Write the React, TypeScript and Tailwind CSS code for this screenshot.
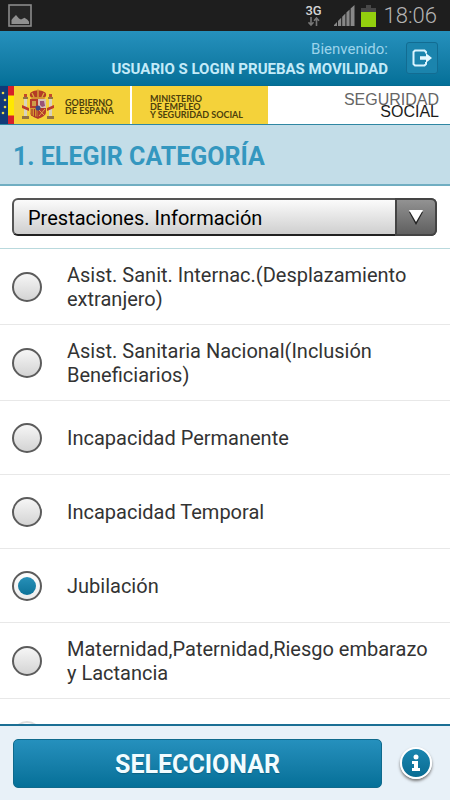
import { useState } from "react";

const categories = [
  "Asist. Sanit. Internac.(Desplazamiento extranjero)",
  "Asist. Sanitaria Nacional(Inclusión Beneficiarios)",
  "Incapacidad Permanente",
  "Incapacidad Temporal",
  "Jubilación",
  "Maternidad,Paternidad,Riesgo embarazo y Lactancia",
];

const radioClass =
  "m-0 size-[30px] shrink-0 appearance-none rounded-full border-2 border-[#5c5c5c] bg-linear-to-b from-[#f6f6f6] to-[#d4d4d4] p-1 checked:from-[#fdfdfd] checked:to-[#ededed] checked:before:block checked:before:size-[18px] checked:before:rounded-full checked:before:bg-linear-to-b checked:before:from-[#2790b8] checked:before:to-[#0c7399] checked:before:content-['']";

function StatusBar() {
  return (
    <div className="flex h-[31px] shrink-0 items-center bg-[#1e1e1e] pr-[13px] pl-2">
      <svg width="24" height="23" viewBox="0 0 24 23" aria-hidden="true">
        <rect x="1" y="1" width="22" height="21" fill="#262626" stroke="#8b8b8b" strokeWidth="1.6" />
        <path d="M3.500 20v-4l1.500-2 3-3 3 3.500 2 1 3.500-1.800 3 2 1.500 2V20z" fill="#909090" />
      </svg>
      <div className="ml-auto flex items-center">
        <div className="mr-3 flex w-4 flex-col items-center">
          <span className="font-['Roboto',sans-serif] text-[13px] leading-3 font-medium text-[#d5d5d5]">3G</span>
          <svg width="12" height="9" viewBox="0 0 12 9" aria-hidden="true" fill="none" stroke="#777" strokeWidth="1.6">
            <path d="M3 0v8M0.500 5.300L3 8l2.500-2.700M8.500 9V1M6 3.700L8.500 1 11 3.700" />
          </svg>
        </div>
        <svg className="mr-1.5" width="21" height="21" viewBox="0 0 21 21" aria-hidden="true">
          <path d="M0 21v-1l3-3v4zM4 21v-5l3.200-3.200V21zM8.200 21V11.800l3.200-3.200V21zM12.400 21V7.600l3.200-3.200V21zM16.600 21V3.500L20.500 0v21z" fill="#888" />
        </svg>
        <svg className="mr-2" width="15" height="22" viewBox="0 0 15 22" aria-hidden="true">
          <path d="M5 0h5v3h5v4H0V3h5z" fill="#484848" />
          <path d="M0 7h15v15H0z" fill="#93cf0e" />
        </svg>
        <span className="font-['Roboto',sans-serif] text-[22px] leading-[30px] font-light text-[#b4b4b4]">18:06</span>
      </div>
    </div>
  );
}

function Header() {
  return (
    <header className="flex h-[55px] shrink-0 items-center justify-end border-b border-[#056b91] bg-linear-to-b from-[#2591bd] to-[#047098] pr-3">
      <div className="pt-0.5 text-right">
        <p className="text-[15px] leading-5 text-[#9bd3ea]">Bienvenido:</p>
        <p className="text-[15px] leading-5 font-bold text-[#c4ebf9]">USUARIO S LOGIN PRUEBAS MOVILIDAD</p>
      </div>
      <button
        type="button"
        aria-label="Salir"
        className="ml-[18px] flex size-8 items-center justify-center rounded-[3px] border border-[#126c92] bg-[#1b84ad]"
      >
        <svg width="20" height="18" viewBox="0 0 20 18" aria-hidden="true">
          <path d="M14 4.500V3l-1.500-1.500H3L1.500 3v12L3 16.500h9.500L14 15v-2" fill="none" stroke="#d9f4ff" strokeWidth="2" />
          <path d="M8 7.300h6V4.200L20 9l-6 4.800v-3.100H8z" fill="#e6f8ff" />
        </svg>
      </button>
    </header>
  );
}

function CoatOfArms() {
  return (
    <svg width="34" height="32" viewBox="0 0 34 32" aria-hidden="true">
      <path d="M9 7c-1-4 3-5 8-6 5 1 9 2 8 6l-2 3H11z" fill="#b43c26" />
      <path d="M17 0v8M11 4l2 4M23 4l-2 4M10 9h14" stroke="#dcae38" strokeWidth="1.300" fill="none" />
      <path d="M9 10h16v13c0 4-4 5-8 7-4-2-8-3-8-7z" fill="#b53b2b" />
      <path d="M17 10h8v9h-8z" fill="#d8c1b3" />
      <path d="M19 12h4l1 5-3 1-2-2z" fill="#985377" />
      <path d="M9 19h8v9c-5-1-8-2-8-5z" fill="#d69a31" />
      <path d="M11 20v7M13.500 20v8M16 20v9" stroke="#a6302a" strokeWidth="1.100" />
      <path d="M11 12h4v5h-4z" fill="#cf9c48" />
      <path d="M18 21l6 6M24 20l-6 7" stroke="#e0a745" />
      <circle cx="17" cy="19" r="2.500" fill="#3a4a86" />
      <path d="M3 10h3v19H3zM28 10h3v19h-3z" fill="#d9d2bc" />
      <path d="M2 8h5v2H2zM27 8h5v2h-5zM1 27h7v3H1zM26 27h7v3h-7z" fill="#95743f" />
      <path d="M1 16l7 3v3l-7-3zM33 16l-7 3v3l7-3z" fill="#bc3c2a" />
      <path d="M3 5h3v3H3zM28 5h3v3h-3z" fill="#c2492a" />
    </svg>
  );
}

function Banner() {
  return (
    <div className="flex h-[39px] shrink-0 items-stretch border-b border-[#2f87a3] bg-white font-['Lato',sans-serif] text-[9px] leading-2 font-bold text-[#4c400c]">
      <svg className="shrink-0" width="14" height="38" viewBox="0 0 14 38" aria-hidden="true">
        <path d="M0 0h8v38H0z" fill="#123a78" />
        <path d="M8 0h6v38H8z" fill="#d5202b" />
        <path d="M8 9.500h6v20H8z" fill="#ffe800" />
        <g fill="#e8d84a">
          <circle cx="3" cy="7" r="1.300" />
          <circle cx="5" cy="14" r="1.300" />
          <circle cx="5" cy="21" r="1.300" />
          <circle cx="3" cy="27" r="1.300" />
        </g>
      </svg>
      <div className="flex w-[116px] shrink-0 items-center bg-[#f4d23a] pl-[7px]">
        <CoatOfArms />
        <p className="ml-2.5 pt-1">
          GOBIERNO
          <br />
          DE ESPAÑA
        </p>
      </div>
      <div className="ml-0.5 flex w-[136px] shrink-0 items-center bg-[#f4d23a] pl-[18px]">
        <p className="pt-1 whitespace-nowrap">
          MINISTERIO
          <br />
          DE EMPLEO
          <br />Y SEGURIDAD SOCIAL
        </p>
      </div>
      <p className="ml-auto self-center pt-0.5 pr-[11px] text-right font-['Liberation_Sans',sans-serif] text-[16px] leading-3 font-normal text-[#666]">
        SEGURIDAD
        <br />
        <span className="text-[#1c1c1c]">SOCIAL</span>
      </p>
    </div>
  );
}

export default function App() {
  const [selected, setSelected] = useState("Jubilación");

  return (
    <div className="flex h-screen flex-col overflow-hidden bg-white font-['Roboto',sans-serif]">
      <StatusBar />
      <Header />
      <Banner />
      <h1 className="flex h-[61px] shrink-0 items-center border-b-2 border-[#70aec2] bg-[#c3dde8] px-[13px] pt-1 text-[25px] font-bold text-[#3497bf]">
        1. ELEGIR CATEGORÍA
      </h1>
      <div className="shrink-0 border-b border-[#b9d9dd] px-3 py-3">
        <div className="relative mr-px h-[38px]">
          <select
            aria-label="Categoría"
            className="size-full appearance-none rounded-md border-2 border-[#555] border-b-[#222] bg-linear-to-b from-[#fbfbfb] to-[#cfcfcf] pt-0.5 pr-12 pl-3.5 text-[20px] text-black"
          >
            <option>Prestaciones. Información</option>
          </select>
          <span className="pointer-events-none absolute inset-y-0 right-0 flex w-[42px] items-center justify-center rounded-r-md border-2 border-[#444] bg-linear-to-b from-[#929292] to-[#606060]">
            <svg width="14" height="15" viewBox="0 0 14 15" aria-hidden="true">
              <path d="M0 2h14L7 15z" fill="#222" />
              <path d="M0 0h14L7 12z" fill="#fff" />
            </svg>
          </span>
        </div>
      </div>
      <main className="min-h-0 flex-1 overflow-hidden">
        {categories.map((category) => (
          <label
            key={category}
            className="flex min-h-[74px] items-center gap-[25px] border-b border-[#e8e8e8] pt-3.5 pr-3 pb-[13px] pl-3 text-[20px] leading-6 text-[#333]"
          >
            <input
              type="radio"
              name="category"
              className={radioClass}
              checked={selected === category}
              onChange={() => setSelected(category)}
            />
            <span>{category}</span>
          </label>
        ))}
        <div className="flex h-[74px] items-center pl-3 opacity-20">
          <input type="radio" name="category" aria-label="Otra" className={radioClass} />
        </div>
      </main>
      <footer className="flex h-[76px] shrink-0 items-center gap-[18px] border-t-2 border-[#1b6f94] bg-[#e8f1f8] pr-[18px] pl-[13px]">
        <button
          type="button"
          className="h-[49px] flex-1 rounded-[5px] border border-[#0f6a8c] bg-linear-to-b from-[#2590bd] to-[#047098] pt-1 text-[25px] font-bold text-[#f2fcff] text-shadow-xs"
        >
          SELECCIONAR
        </button>
        <button
          type="button"
          aria-label="Información"
          className="flex size-8 items-center justify-center rounded-full border-2 border-white bg-linear-to-b from-[#1b86b0] to-[#086c92] shadow-[0_2px_3px_#777]"
        >
          <svg width="10" height="18" viewBox="0 0 10 18" aria-hidden="true" fill="#fff">
            <circle cx="5" cy="3" r="2.500" />
            <path d="M1 7h6v7h2v3H1v-3h2v-4H1z" />
          </svg>
        </button>
      </footer>
    </div>
  );
}
